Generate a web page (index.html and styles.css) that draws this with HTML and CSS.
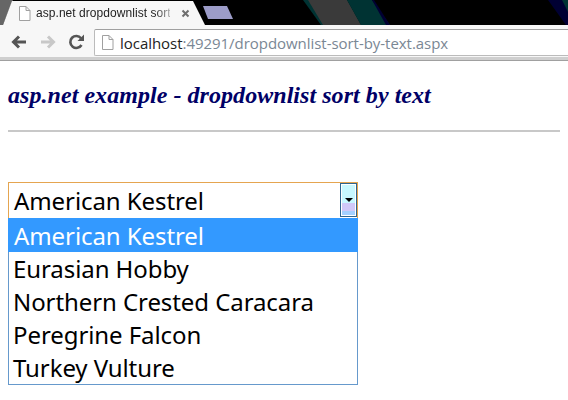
FILE: index.html
```html
<!DOCTYPE html>
<html lang="en">
<head>
    <meta charset="UTF-8">
    <title>asp.net dropdownlist sort by text</title>
    <link rel="stylesheet" href="styles.css">
</head>
<body>
    <div class="tabstrip">
        <svg class="tabstrip-art" width="568" height="25" viewBox="0 0 568 25">
            <path d="M303 0L347 0L361 25L321 25Z" fill="#003333"/>
            <path d="M308 0L347 0L361 25L323 25Z" fill="#3a3a3a"/>
            <path d="M347 0L372 0L390 25L361 25Z" fill="#003333"/>
            <path d="M372 0L374 0L390 25L386 25Z" fill="#000033"/>
            <path d="M548 0L568 0L568 25L566 25Z" fill="#000033"/>
            <path d="M562 0L568 0L568 12Z" fill="#003333"/>
            <path d="M0 0L13 0L3 25L0 25Z" fill="#666"/>
        </svg>
        <div class="tab">
            <svg class="page-icon" width="13" height="15" viewBox="0 0 13 15">
                <path d="M1.500 .5H8L12 4.500V14.500H1.500Z M8 .5V4.500H12" fill="#fff" stroke="#a0a0a0"/>
            </svg>
            <span class="tab-title">asp.net dropdownlist sort</span>
            <svg class="tab-close" width="9" height="9" viewBox="0 0 9 9">
                <path d="M1.500 1.500L7.500 7.500M7.500 1.500L1.500 7.500" stroke="#6f6f6f" stroke-width="2"/>
            </svg>
        </div>
        <div class="tab-new"></div>
    </div>
    <div class="toolbar">
        <svg class="nav-icon" width="18" height="16" viewBox="0 0 18 16">
            <path d="M16 8H4M9 2.500L3.500 8L9 13.500" fill="none" stroke="#555" stroke-width="3"/>
        </svg>
        <svg class="nav-icon" width="18" height="16" viewBox="0 0 18 16">
            <path d="M2 8H14M9 2.500L14.500 8L9 13.500" fill="none" stroke="#c8c8c8" stroke-width="3"/>
        </svg>
        <svg class="nav-icon" width="17" height="16" viewBox="0 0 17 16">
            <path d="M13.500 11A6 6 0 1 1 13 4.200" fill="none" stroke="#555" stroke-width="2.600"/>
            <path d="M9.500 7H16V.5Z" fill="#555"/>
        </svg>
        <div class="omnibox">
            <svg class="page-icon" width="13" height="15" viewBox="0 0 13 15">
                <path d="M1.500 .5H8L12 4.500V14.500H1.500Z M8 .5V4.500H12" fill="#fff" stroke="#a0a0a0"/>
            </svg>
            <span class="url"><span class="url-host">localhost</span>:49291/dropdownlist-sort-by-text.aspx</span>
        </div>
    </div>
    <div class="toolbar-edge"></div>

    <div class="content">
        <h2 class="page-title">asp.net example - dropdownlist sort by text</h2>
        <hr class="rule">
        <div class="dropdown">
            <div class="dropdown-box">
                <span>American Kestrel</span>
                <span class="dropdown-btn"><span class="dropdown-arrow"></span></span>
            </div>
            <ul class="dropdown-list">
                <li class="selected">American Kestrel</li>
                <li>Eurasian Hobby</li>
                <li>Northern Crested Caracara</li>
                <li>Peregrine Falcon</li>
                <li>Turkey Vulture</li>
            </ul>
        </div>
    </div>
</body>
</html>
```

FILE: styles.css
```css
html, body {
    margin: 0;
    padding: 0;
    background: #fff;
    overflow: hidden;
}
.tabstrip {
    position: relative;
    display: flex;
    height: 25px;
    background: #000;
}
.tabstrip-art {
    position: absolute;
    left: 0;
    top: 0;
}
.tab {
    position: relative;
    display: flex;
    align-items: center;
    width: 202px;
    height: 24px;
    margin-top: 1px;
    margin-left: 3px;
    padding-left: 15px;
    box-sizing: border-box;
    background: #f7f7f7;
    clip-path: polygon(0 100%, 9px 0, 190px 0, 202px 100%);
}
.tab-title {
    width: 134px;
    margin-left: 5px;
    white-space: nowrap;
    font: 12px "Liberation Sans", sans-serif;
    letter-spacing: .05px;
    color: #222;
    -webkit-mask-image: linear-gradient(to right, #000 88%, rgba(0, 0, 0, .35));
    mask-image: linear-gradient(to right, #000 88%, rgba(0, 0, 0, .35));
}
.tab-close {
    margin-left: 11px;
}
.tab-new {
    position: relative;
    width: 30px;
    height: 13px;
    margin-top: 6px;
    margin-left: -2px;
    background: #9c9cc8;
    clip-path: polygon(0 0, 24px 0, 30px 100%, 5px 100%);
}
.toolbar {
    display: flex;
    align-items: flex-start;
    height: 32px;
    padding: 4px 0 0 10px;
    box-sizing: border-box;
    background: #f7f7f7;
}
.nav-icon {
    margin-top: 5px;
    margin-right: 11px;
}
.omnibox {
    display: flex;
    align-items: center;
    flex: 1;
    height: 27px;
    margin-left: -2px;
    padding-left: 6px;
    box-sizing: border-box;
    border: 1px solid #bbb;
    border-top-color: #a0a0a0;
    border-right: 0;
    border-radius: 2px 0 0 2px;
    background: #fff;
}
.url {
    margin-left: 6px;
    font: 15px "Open Sans", "Liberation Sans", sans-serif;
    letter-spacing: -.04px;
    color: #7a8794;
    white-space: nowrap;
}
.url-host {
    color: #222;
}
.toolbar-edge {
    height: 4px;
    border-bottom: 1px solid #a0a0a0;
    background: #cfcfcf;
    box-sizing: border-box;
}
.content {
    padding: 0 8px;
}
.page-title {
    margin: 21px 0 0;
    font: italic bold 24px "Liberation Serif", serif;
    letter-spacing: .05px;
    color: #000066;
}
.rule {
    height: 2px;
    margin: 21px 0 0;
    border: 0;
    background: #c8c8c8;
}
.dropdown {
    width: 350px;
    margin-top: 50px;
    font: 24px "Noto Sans", sans-serif;
    letter-spacing: -.08px;
}
.dropdown-box {
    display: flex;
    justify-content: space-between;
    height: 36px;
    box-sizing: border-box;
    padding: 0 0 0 5px;
    border: 1px solid #e5a550;
    border-bottom: 0;
    line-height: 36px;
    color: #000;
}
.dropdown-btn {
    display: flex;
    justify-content: center;
    align-items: center;
    width: 17px;
    height: 34px;
    border: 1px solid #2f6690;
    box-shadow: inset 0 0 0 1px #fff;
    background: linear-gradient(#c8f8ff 0 60%, #d0c8f8 60% 85%, #a4d0ff 85%);
    box-sizing: border-box;
}
.dropdown-arrow {
    width: 0;
    height: 0;
    border: 4px solid transparent;
    border-top: 4px solid #000;
    border-bottom: 0;
}
.dropdown-list {
    margin: 0;
    padding: 0;
    list-style: none;
    border: 1px solid #6699cc;
    border-top: 0;
}
.dropdown-list li {
    height: 33px;
    padding-left: 4px;
    line-height: 33px;
    color: #000;
}
.dropdown-list li.selected {
    height: 34px;
    margin: 0 -1px;
    padding-left: 6px;
    line-height: 35px;
    background: #3399ff;
    color: #fff;
}
```
